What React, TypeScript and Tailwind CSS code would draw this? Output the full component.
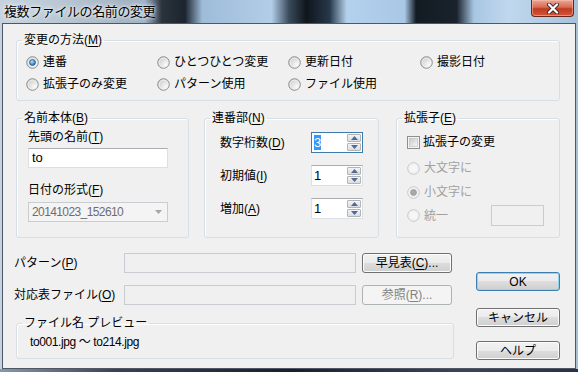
import React from "react";

const U = ({ children }: { children: string }) => (
  <span className="underline decoration-1 underline-offset-[2px]">{children}</span>
);

const Radio = ({ checked = false, disabled = false }: { checked?: boolean; disabled?: boolean }) => (
  <svg width="13" height="13" viewBox="0 0 13 13" className="shrink-0">
    <defs>
      <radialGradient id="rbody" cx="70%" cy="70%" r="80%">
        <stop offset="0%" stopColor="#fbfbfb" />
        <stop offset="100%" stopColor="#c9c9c9" />
      </radialGradient>
      <radialGradient id="rdot" cx="40%" cy="35%" r="70%">
        <stop offset="0%" stopColor="#a9e4ff" />
        <stop offset="100%" stopColor="#1b5ea8" />
      </radialGradient>
    </defs>
    <circle cx="6.5" cy="6.5" r="5.8" fill={disabled ? "#f6f6f6" : "url(#rbody)"} stroke={disabled ? "#c6c6c6" : "#8e8f8f"} strokeWidth="1" />
    <circle cx="6.5" cy="6.5" r="4.3" fill="none" stroke={disabled ? "#ececec" : "#f4f4f4"} strokeWidth="0.8" />
    {checked && (
      <circle cx="6.5" cy="6.5" r="3" fill={disabled ? "#a9a9a9" : "url(#rdot)"} stroke={disabled ? "#8f8f8f" : "#1f4f86"} strokeWidth="0.6" />
    )}
  </svg>
);

const Checkbox = () => (
  <svg width="13" height="13" viewBox="0 0 13 13" className="shrink-0">
    <defs>
      <linearGradient id="cbin" x1="0" y1="0" x2="1" y2="1">
        <stop offset="0%" stopColor="#c6c9ce" />
        <stop offset="100%" stopColor="#f7f7f7" />
      </linearGradient>
    </defs>
    <rect x="0.5" y="0.5" width="12" height="12" fill="#f4f4f4" stroke="#8e8f8f" />
    <rect x="2.5" y="2.5" width="8" height="8" fill="url(#cbin)" stroke="#b9bcc1" strokeWidth="0.6" />
  </svg>
);

const Arrow = ({ up }: { up?: boolean }) => (
  <svg width="7" height="4" viewBox="0 0 7 4">
    <polygon points={up ? "0,4 7,4 3.5,0" : "0,0 7,0 3.5,4"} fill="#4d6b9a" />
  </svg>
);

const Spin = ({ value, focused = false }: { value: string; focused?: boolean }) => (
  <div
    className={
      focused
        ? "flex h-[21px] w-[52px] border border-[#3d7bad] bg-white"
        : "flex h-[21px] w-[52px] border border-[#dbdfe6] border-t-[#abadb3] bg-white"
    }
  >
    <div className="flex flex-1 items-center pl-[2px] text-[13px] leading-[15px]">
      {focused ? <span className="bg-[#3399ff] text-white">{value}</span> : <span>{value}</span>}
    </div>
    <div className="flex w-[16px] flex-col gap-[1px] p-[1px]">
      <div className="flex flex-1 items-center justify-center rounded-[1px] border border-[#b4b4b4] bg-[linear-gradient(#f4f4f4,#dcdcdc)]">
        <Arrow up />
      </div>
      <div className="flex flex-1 items-center justify-center rounded-[1px] border border-[#b4b4b4] bg-[linear-gradient(#f4f4f4,#dcdcdc)]">
        <Arrow />
      </div>
    </div>
  </div>
);

const Btn = ({ children, disabled = false, isDefault = false, className = "" }: { children: React.ReactNode; disabled?: boolean; isDefault?: boolean; className?: string }) => {
  let look =
    "border-[#707070] bg-[linear-gradient(#f2f2f2_0%,#ebebeb_50%,#dddddd_50%,#cfcfcf_100%)] shadow-[inset_0_0_0_1px_#fcfcfc] text-black";
  if (disabled) look = "border-[#adb2b5] bg-[#f4f4f4] text-[#838383]";
  if (isDefault)
    look =
      "border-[#3c7fb1] bg-[linear-gradient(#f2f2f2_0%,#ebebeb_50%,#dddddd_50%,#cfcfcf_100%)] shadow-[inset_0_0_0_1px_#8fd3f5] text-black";
  return (
    <div className={"flex items-center justify-center rounded-[3px] border text-[12px] leading-[14px] " + look + " " + className}>
      {children}
    </div>
  );
};

const Group = ({ legend, className, children }: { legend: React.ReactNode; className: string; children?: React.ReactNode }) => (
  <fieldset className={"rounded-[3px] border border-[#d5dfe5] p-0 shadow-[inset_1px_1px_0_#ffffff] " + className}>
    <legend className="ml-[5px] px-[2px] text-[12px] leading-[14px]">{legend}</legend>
    {children}
  </fieldset>
);

const RadioItem = ({ label, checked, disabled }: { label: React.ReactNode; checked?: boolean; disabled?: boolean }) => (
  <div className="flex h-[16px] items-center gap-[4px]">
    <Radio checked={checked} disabled={disabled} />
    <span className={disabled ? "text-[#a0a0a0]" : "text-black"}>{label}</span>
  </div>
);

export default function App() {
  return (
    <div className="flex h-[372px] w-[578px] flex-col overflow-hidden bg-[linear-gradient(90deg,#c6d3de_0%,#b9c8d4_10%,#a6b6c4_20%,#9db2c6_25%,#2a323c_28%,#1c242e_32%,#9ebcd8_35%,#b2cde8_47%,#3a4a5a_50%,#0f151c_53%,#26384a_57%,#b4d1ec_60%,#a9c8e6_70%,#121a22_72%,#1a222c_79%,#a8c6e2_82%,#c0d8ee_88%,#a6c2da_100%)] font-['Liberation_Sans','Noto_Sans_CJK_JP',sans-serif] text-[12px] text-black">
      {/* title bar */}
      <div className="flex h-[23px] shrink-0 items-start justify-between pl-[4px] pr-[4px]">
        <div className="mt-[3px] text-[13px] leading-[17px] tracking-[-0.4px] text-black [text-shadow:0_0_6px_#ffffff,0_0_3px_#ffffff]">
          複数ファイルの名前の変更
        </div>
        <div className="flex h-[17px] w-[43px] items-center justify-center rounded-b-[4px] border border-t-0 border-[#6b2418] bg-[linear-gradient(#e9a899_0%,#d86b52_45%,#c23a1e_55%,#d2583c_100%)] shadow-[inset_0_0_0_1px_rgba(255,200,180,0.5)]">
          <svg width="14" height="11" viewBox="0 0 14 11">
            <path d="M3 1.5 L11 9.5 M11 1.5 L3 9.5" stroke="#3a2a2a" strokeWidth="4" strokeLinecap="round" />
            <path d="M3 1.5 L11 9.5 M11 1.5 L3 9.5" stroke="#ffffff" strokeWidth="2.3" strokeLinecap="round" />
          </svg>
        </div>
      </div>

      {/* client area */}
      <div className="mx-[2px] flex h-[346px] shrink-0 flex-col border border-[#4c5866] bg-[#f0f0f0]">
        {/* 変更の方法 */}
        <Group
          legend={<>変更の方法(<U>M</U>)</>}
          className="ml-[13px] mt-[9px] h-[68px] w-[544px]"
        >
          <div className="ml-[9px] mt-[7px] grid grid-cols-[131px_131px_132px_100px] gap-y-[6px]">
            <RadioItem label="連番" checked />
            <RadioItem label="ひとつひとつ変更" />
            <RadioItem label="更新日付" />
            <RadioItem label="撮影日付" />
            <RadioItem label="拡張子のみ変更" />
            <RadioItem label="パターン使用" />
            <RadioItem label="ファイル使用" />
          </div>
        </Group>

        {/* three groups */}
        <div className="ml-[13px] mt-[10px] flex">
          <Group legend={<>名前本体(<U>B</U>)</>} className="h-[127px] w-[173px]">
            <div className="ml-[11px] flex flex-col">
              <div className="mt-[5px] h-[14px] leading-[14px]">
                先頭の名前(<U>T</U>)
              </div>
              <div className="mt-[4px] flex h-[20px] w-[140px] items-center border border-[#dbdfe6] border-t-[#abadb3] bg-white pl-[3px] text-[13px]">
                to
              </div>
              <div className="mt-[15px] h-[14px] leading-[14px]">
                日付の形式(<U>F</U>)
              </div>
              <div className="mt-[5px] flex h-[20px] w-[140px] items-center justify-between border border-[#c9ccd1] bg-[#f4f4f4] pl-[3px] pr-[5px] text-[12px] tracking-[-0.6px] text-[#6d6d6d]">
                <span>20141023_152610</span>
                <svg width="7" height="4" viewBox="0 0 7 4">
                  <polygon points="0,0 7,0 3.5,4" fill="#a6a6a6" />
                </svg>
              </div>
            </div>
          </Group>

          <Group legend={<>連番部(<U>N</U>)</>} className="ml-[15px] h-[127px] w-[175px]">
            <div className="ml-[15px] mt-[7px] flex flex-col gap-[12px]">
              <div className="flex h-[21px] items-center">
                <span className="w-[91px]">数字桁数(<U>D</U>)</span>
                <Spin value="3" focused />
              </div>
              <div className="flex h-[21px] items-center">
                <span className="w-[91px]">初期値(<U>I</U>)</span>
                <Spin value="1" />
              </div>
              <div className="flex h-[21px] items-center">
                <span className="w-[91px]">増加(<U>A</U>)</span>
                <Spin value="1" />
              </div>
            </div>
          </Group>

          <Group legend={<>拡張子(<U>E</U>)</>} className="ml-[17px] h-[127px] w-[164px]">
            <div className="ml-[10px] flex flex-col">
              <div className="mt-[9px] flex h-[16px] items-center gap-[3px]">
                <Checkbox />
                <span>拡張子の変更</span>
              </div>
              <div className="mt-[10px]">
                <RadioItem label="大文字に" disabled />
              </div>
              <div className="mt-[8px]">
                <RadioItem label="小文字に" checked disabled />
              </div>
              <div className="mt-[5px] flex h-[21px] items-center">
                <div className="w-[84px]">
                  <RadioItem label="統一" disabled />
                </div>
                <div className="h-[21px] w-[53px] border border-[#c9ccd1] bg-[#f0f0f0]" />
              </div>
            </div>
          </Group>
        </div>

        {/* lower section */}
        <div className="ml-[11px] mt-[15px] flex">
          <div className="flex w-[439px] flex-col">
            <div className="flex h-[20px] items-center">
              <span className="w-[110px]">パターン(<U>P</U>)</span>
              <div className="h-[20px] w-[232px] border border-[#c9ccd1] bg-[#f0f0f0]" />
              <Btn className="ml-[6px] h-[20px] w-[90px]">
                早見表(<U>C</U>)...
              </Btn>
            </div>
            <div className="mt-[12px] flex h-[20px] items-center">
              <span className="w-[110px]">対応表ファイル(<U>O</U>)</span>
              <div className="h-[20px] w-[232px] border border-[#c9ccd1] bg-[#f0f0f0]" />
              <Btn disabled className="ml-[6px] h-[20px] w-[90px]">
                参照(<U>R</U>)...
              </Btn>
            </div>
            <Group legend="ファイル名 プレビュー" className="ml-[2px] mt-[11px] h-[43px] w-[438px]">
              <div className="ml-[13px] mt-[5px] h-[14px] leading-[14px] tracking-[-0.4px]">to001.jpg ～ to214.jpg</div>
            </Group>
          </div>

          <div className="ml-[23px] flex flex-col">
            <Btn isDefault className="mt-[19px] h-[19px] w-[84px]">
              OK
            </Btn>
            <Btn className="mt-[17px] h-[19px] w-[84px]">キャンセル</Btn>
            <Btn className="mt-[14px] h-[19px] w-[84px]">ヘルプ</Btn>
          </div>
        </div>
      </div>

      {/* bottom frame */}
      <div className="h-[3px] shrink-0 bg-[linear-gradient(90deg,#8a98a6_0%,#3a424c_20%,#1a2028_50%,#3c4652_80%,#2a323c_100%)]" />
    </div>
  );
}
